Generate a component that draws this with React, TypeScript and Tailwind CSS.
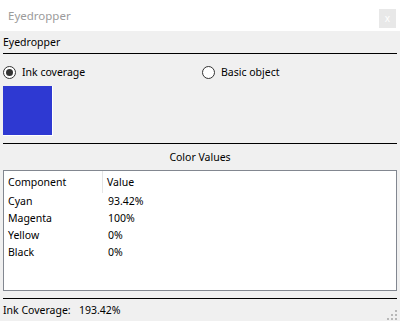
import React from "react";

const font = { fontFamily: '"Noto Sans", "Liberation Sans", sans-serif' };

function Radio({ checked, label }: { checked: boolean; label: string }) {
  return (
    <div className="flex items-center h-[16px]">
      <div className="w-[13px] h-[13px] rounded-full border border-[#333333] bg-white flex items-center justify-center">
        {checked && <div className="w-[7px] h-[7px] rounded-full bg-[#333333]" />}
      </div>
      <span className="ml-[6px] text-[10.5px] text-black leading-none">{label}</span>
    </div>
  );
}

export default function App() {
  const rows = [
    ["Cyan", "93.42%"],
    ["Magenta", "100%"],
    ["Yellow", "0%"],
    ["Black", "0%"],
  ];
  return (
    <div className="w-[400px] h-[321px] bg-[#f0f0f0] flex flex-col overflow-hidden" style={font}>
      <div className="h-[31px] bg-white flex items-center justify-between pl-[8px] pr-[4px] shrink-0">
        <span className="text-[11.5px] text-[#9b9b9b] leading-none">Eyedropper</span>
        <div className="w-[17px] h-[19px] bg-[#e8e8e8] flex items-center justify-center text-white text-[10px] leading-none mt-[5px]">
          x
        </div>
      </div>
      <div className="flex flex-col px-[3px]">
        <div className="h-[22px] flex items-center text-[10.5px] text-black leading-none">Eyedropper</div>
        <div className="h-px bg-black" />
        <div className="flex mt-[10px]">
          <div className="w-[199px]">
            <Radio checked label="Ink coverage" />
          </div>
          <Radio checked={false} label="Basic object" />
        </div>
        <div className="mt-[6px] w-[50px] h-[50px] bg-[#2e39d2] border-r border-b border-white" />
        <div className="mt-[7px] h-px bg-black" />
        <div className="h-[26px] flex items-center justify-center text-[10.5px] text-black leading-none">
          Color Values
        </div>
        <div className="h-[121px] bg-white border border-[#828790] flex flex-col">
          <div className="h-[22px] flex items-center text-[10.5px] text-black leading-none">
            <div className="w-[99px] pl-[4px] h-full flex items-center border-r border-[#e5e5e5]">Component</div>
            <div className="pl-[4px]">Value</div>
          </div>
          {rows.map(([a, b]) => (
            <div key={a} className="h-[17px] flex items-center text-[10.5px] text-black leading-none">
              <div className="w-[99px] pl-[4px]">{a}</div>
              <div className="pl-[5px]">{b}</div>
            </div>
          ))}
        </div>
        <div className="mt-[7px] h-px bg-black" />
        <div className="h-[23px] flex items-center justify-between text-[10.5px] text-black leading-none">
          <div className="flex items-center">
            <span className="w-[76px]">Ink Coverage:</span>
            <span>193.42%</span>
          </div>
          <svg width="10" height="10" viewBox="0 0 10 10" className="mt-[8px]">
            <g fill="#b8b8b8">
              <rect x="8" y="0" width="2" height="2" />
              <rect x="4" y="4" width="2" height="2" />
              <rect x="8" y="4" width="2" height="2" />
              <rect x="0" y="8" width="2" height="2" />
              <rect x="4" y="8" width="2" height="2" />
              <rect x="8" y="8" width="2" height="2" />
            </g>
          </svg>
        </div>
      </div>
    </div>
  );
}
